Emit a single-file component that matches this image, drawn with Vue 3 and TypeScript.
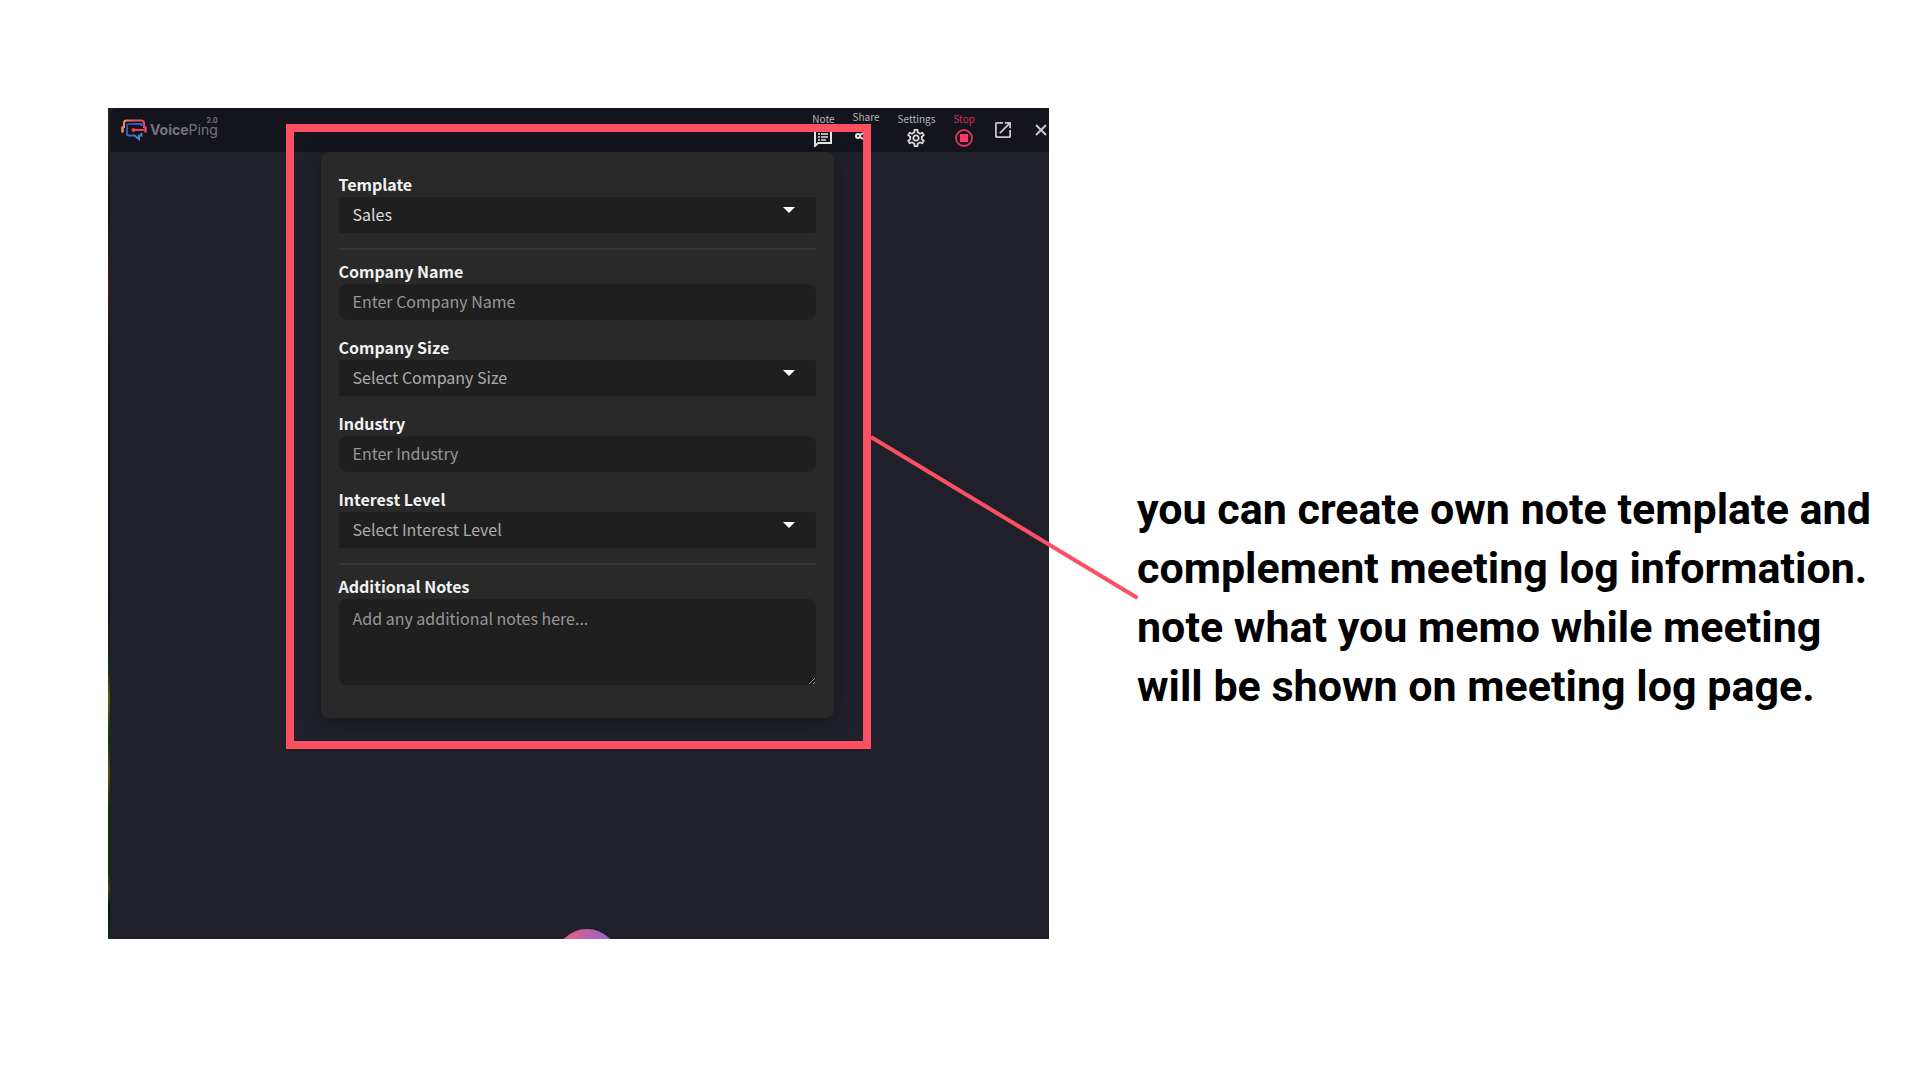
<script setup lang="ts">
import { ref } from 'vue'

interface Field {
  id: string
  label: string
  kind: 'select' | 'text'
  hint: string
  options?: string[]
}

const templates: string[] = ['Sales', 'Interview', 'Support']
const template = ref<string>('Sales')

const fields: Field[] = [
  { id: 'company-name', label: 'Company Name', kind: 'text', hint: 'Enter Company Name' },
  { id: 'company-size', label: 'Company Size', kind: 'select', hint: 'Select Company Size', options: ['1-50', '51-500', '500+'] },
  { id: 'industry', label: 'Industry', kind: 'text', hint: 'Enter Industry' },
  { id: 'interest-level', label: 'Interest Level', kind: 'select', hint: 'Select Interest Level', options: ['Low', 'Medium', 'High'] },
]

const values = ref<Record<string, string>>({
  'company-name': '',
  'company-size': '',
  industry: '',
  'interest-level': '',
})
const notes = ref<string>('')
</script>

<template>
  <main class="slide">
    <section class="shot">
      <div class="app">
        <header class="bar">
          <a class="brand" href="#" aria-label="VoicePing 2.0">
            <svg class="logo" viewBox="0 0 26 22" fill="none" aria-hidden="true">
              <defs>
                <linearGradient id="band" x1="0" y1="0" x2="26" y2="0" gradientUnits="userSpaceOnUse">
                  <stop offset="0" stop-color="#f6a04d" />
                  <stop offset="0.5" stop-color="#e8595a" />
                  <stop offset="1" stop-color="#e8405c" />
                </linearGradient>
                <linearGradient id="bubble" x1="5" y1="4" x2="20" y2="20" gradientUnits="userSpaceOnUse">
                  <stop offset="0" stop-color="#2b3fa8" />
                  <stop offset="1" stop-color="#4b8be0" />
                </linearGradient>
              </defs>
              <path d="M3 9V4q0-2.500 2.500-2.500h15q2.500 0 2.500 2.500v5" stroke="url(#band)" stroke-width="2" />
              <path d="M1.500 8.500v4M24.500 8.500v4" stroke="url(#band)" stroke-width="2.500" stroke-linecap="round" />
              <path d="M20.500 7V5H7.500Q6 5 6 6.500v8q0 2 2 2h5.500l4.500 3.500v-3.500h2.500V14" stroke="url(#bubble)" stroke-width="2" />
              <path d="M12 11h11.500" stroke="#e8405c" stroke-width="2" />
              <circle cx="12.500" cy="11" r="2" fill="#e8405c" />
            </svg>
            <span class="name">
              <span class="version">2.0</span>
              <span class="word"><b>Voice</b>Ping</span>
            </span>
          </a>
          <nav class="tools">
            <button class="tool" type="button">
              <span>Note</span>
              <svg width="18" height="18" viewBox="0 0 18 18" fill="none" stroke="#e6e6e6" stroke-width="2" aria-hidden="true">
                <path d="M1 17V1h16v13H4z" />
                <path d="M4 5h2M4 8h2M4 11h2M7 5h7M7 8h7M7 11h5" stroke-width="1.500" />
              </svg>
            </button>
            <button class="tool share" type="button">
              <span>Share</span>
              <svg width="18" height="18" viewBox="0 0 18 18" fill="none" stroke="#e6e6e6" stroke-width="2" aria-hidden="true">
                <circle cx="5" cy="9" r="2" />
                <circle cx="14" cy="4" r="2" />
                <circle cx="14" cy="14" r="2" />
                <path d="M7 8l5-3M7 10l5 3" />
              </svg>
            </button>
            <button class="tool" type="button">
              <span>Settings</span>
              <svg width="18" height="18" viewBox="2 2 20 20" fill="#d8d8d8" aria-hidden="true">
                <path d="M19.430 12.980c.040-.320.070-.640.070-.980s-.030-.660-.070-.980l2.110-1.650c.190-.150.240-.420.120-.640l-2-3.460c-.090-.160-.260-.250-.440-.250-.060 0-.120.010-.170.030l-2.490 1c-.520-.400-1.080-.730-1.690-.980l-.380-2.650C14.460 2.180 14.250 2 14 2h-4c-.250 0-.460.180-.490.420l-.380 2.650c-.610.250-1.170.590-1.690.980l-2.490-1c-.060-.020-.120-.030-.180-.030-.170 0-.340.090-.430.250l-2 3.460c-.130.220-.070.490.120.640l2.110 1.650c-.040.320-.070.650-.070.980s.030.660.070.980l-2.110 1.650c-.190.150-.240.420-.120.640l2 3.460c.090.160.260.250.440.250.060 0 .120-.010.170-.030l2.490-1c.520.400 1.080.730 1.690.980l.380 2.650c.030.240.240.420.490.420h4c.250 0 .460-.180.490-.420l.380-2.650c.610-.250 1.170-.590 1.690-.980l2.490 1c.060.020.120.030.180.030.170 0 .340-.090.430-.250l2-3.460c.120-.220.070-.490-.120-.640l-2.110-1.650zm-1.980-1.710c.040.310.050.520.050.730s-.020.430-.050.730l-.140 1.130.890.700 1.080.840-.700 1.210-1.270-.510-1.040-.420-.900.680c-.430.320-.840.560-1.250.730l-1.060.430-.160 1.130-.200 1.350h-1.400l-.190-1.350-.160-1.130-1.060-.430c-.430-.180-.830-.410-1.230-.710l-.910-.700-1.060.430-1.270.510-.700-1.210 1.080-.840.890-.700-.140-1.130c-.030-.310-.050-.540-.050-.740s.020-.430.050-.730l.140-1.130-.890-.700-1.080-.840.700-1.210 1.270.510 1.040.420.900-.680c.430-.320.840-.560 1.250-.730l1.060-.430.160-1.130.200-1.350h1.390l.190 1.350.160 1.130 1.060.430c.430.180.830.410 1.230.710l.910.700 1.060-.430 1.270-.510.700 1.210-1.070.850-.890.700.140 1.130zM12 8c-2.210 0-4 1.790-4 4s1.790 4 4 4 4-1.790 4-4-1.790-4-4-4zm0 6c-1.100 0-2-.900-2-2s.900-2 2-2 2 .900 2 2-.900 2-2 2z" />
              </svg>
            </button>
            <button class="tool stop" type="button">
              <span>Stop</span>
              <svg width="18" height="18" viewBox="0 0 18 18" aria-hidden="true">
                <circle cx="9" cy="9" r="8" fill="none" stroke="#e0305c" stroke-width="2" />
                <rect x="5" y="5" width="8" height="8" fill="#ff3868" />
              </svg>
            </button>
            <button class="tool" type="button" aria-label="Open in new window">
              <svg width="16" height="16" viewBox="3 3 18 18" fill="#c8c8c8" aria-hidden="true">
                <path d="M19 19H5V5h7V3H5c-1.110 0-2 .900-2 2v14c0 1.100.890 2 2 2h14c1.100 0 2-.900 2-2v-7h-2v7zM14 3v2h3.590l-9.830 9.830 1.410 1.410L19 6.410V10h2V3h-7z" />
              </svg>
            </button>
            <button class="tool close" type="button" aria-label="Close">
              <svg width="12" height="16" viewBox="0 0 12 16" stroke="#c8c8c8" stroke-width="2" aria-hidden="true">
                <path d="M1 3l10 10M11 3L1 13" />
              </svg>
            </button>
          </nav>
        </header>

        <form class="card" @submit.prevent>
          <div class="field">
            <label for="template">Template</label>
            <select id="template" v-model="template">
              <option v-for="t in templates" :key="t">{{ t }}</option>
            </select>
          </div>
          <hr />
          <div v-for="f in fields" :key="f.id" class="field">
            <label :for="f.id">{{ f.label }}</label>
            <select v-if="f.kind === 'select'" :id="f.id" v-model="values[f.id]" class="unset">
              <option value="">{{ f.hint }}</option>
              <option v-for="o in f.options" :key="o">{{ o }}</option>
            </select>
            <input v-else :id="f.id" v-model="values[f.id]" type="text" :placeholder="f.hint" />
          </div>
          <hr />
          <div class="field">
            <label for="notes">Additional Notes</label>
            <textarea id="notes" v-model="notes" placeholder="Add any additional notes here..."></textarea>
          </div>
        </form>
        <span class="orb"></span>
      </div>
      <div class="highlight"></div>
      <svg class="connector" viewBox="0 0 100 100" preserveAspectRatio="none" aria-hidden="true">
        <path d="M0 0L100 100" vector-effect="non-scaling-stroke" />
      </svg>
    </section>

    <p class="caption">
      you can create own note template and<br />
      complement meeting log information.<br />
      note what you memo while meeting<br />
      will be shown on meeting log page.
    </p>
  </main>
</template>

<style>
body {
  margin: 0;
  background: #fff;
}
</style>

<style scoped>
.slide {
  box-sizing: border-box;
  display: flex;
  align-items: flex-start;
  gap: 88px;
  min-height: 100vh;
  padding: 108px 0 108px 108px;
}

.shot {
  position: relative;
  flex: none;
  width: 52%;
  max-width: 941px;
  font-family: "Noto Sans CJK JP", "Noto Sans", sans-serif;
}

.app {
  position: relative;
  box-sizing: border-box;
  min-height: 831px;
  overflow: hidden;
  background: #20202a;
}

.app::before {
  content: "";
  position: absolute;
  inset: 0 auto 0 0;
  width: 2px;
  background: linear-gradient(#22240f, #14180f 12%, #3a1c20 22%, #101810 30%, #14141a 60%, #1c3010 68%, #5a5c14 71%, #143008 76%, #5c5010 80%, #123008 84%, #123008 92%, #3c4c08 94%, #04140a 96%, #123008);
}

.bar {
  display: flex;
  justify-content: space-between;
  height: 44px;
  margin-left: 2px;
  padding-right: 2px;
  border-top-left-radius: 8px;
  background: #14141d;
}

.brand {
  display: flex;
  align-items: flex-start;
  gap: 3px;
  padding: 9px 0 0 11px;
  color: #74747e;
  text-decoration: none;
}

.logo {
  width: 26px;
  height: 22px;
  padding-top: 2px;
}

.name {
  display: flex;
  flex-direction: column;
  align-items: flex-end;
}

.word {
  font: 14px/12px Inter, sans-serif;
}

.version {
  font: 700 7px/7px Inter, sans-serif;
}

.tools {
  display: flex;
  align-items: flex-start;
  gap: 18px;
}

.tool {
  display: flex;
  flex-direction: column;
  align-items: center;
  gap: 4px;
  padding: 4px 0 0;
  border: 0;
  background: none;
  color: #b4b4b8;
  font: 10px/13px "Noto Sans CJK JP", sans-serif;
}

.tool svg {
  display: block;
}

.share {
  align-items: flex-start;
  padding-top: 2px;
}

.stop {
  margin-right: 2px;
  color: #d42c5c;
}

.tool[aria-label] {
  padding-top: 14px;
}

.close {
  padding-left: 6px;
}

.card {
  position: relative;
  box-sizing: border-box;
  width: 513px;
  min-height: 566px;
  margin-left: calc(50% - 258px);
  padding: 21px 18px 32px;
  border-radius: 8px;
  background: #292929;
  box-shadow: 0 4px 20px rgb(0 0 0 / 30%);
}

.field {
  display: flex;
  flex-direction: column;
}

.field + .field {
  margin-top: 16px;
}

label {
  margin-bottom: 2px;
  color: #f2f2f2;
  font-size: 16px;
  font-weight: 700;
  line-height: 22px;
}

input,
select,
textarea {
  box-sizing: border-box;
  width: 100%;
  height: 36px;
  margin: 0;
  padding: 0 14px 2px;
  border: 0;
  border-radius: 8px;
  background: #1f1f1f;
  color: #dedede;
  font: 16px/24px "Noto Sans CJK JP", sans-serif;
}

select {
  appearance: none;
  border-radius: 2px;
  background: #1f1f1f url("data:image/svg+xml,%3Csvg xmlns='http://www.w3.org/2000/svg' width='12' height='6'%3E%3Cpath d='M0 0h12L6 6z' fill='white'/%3E%3C/svg%3E") no-repeat right 21px top 10px;
}

.unset {
  color: #adadad;
}

::placeholder {
  color: #979797;
  opacity: 1;
}

textarea {
  display: block;
  height: 86px;
  padding-top: 7px;
  resize: vertical;
}

hr {
  height: 2px;
  margin: 15px 0 10px;
  border: 0;
  background: #363636;
}

.orb {
  position: absolute;
  top: 821px;
  left: calc(50% - 24px);
  width: 64px;
  height: 64px;
  border-radius: 50%;
  background: linear-gradient(90deg, #f0607c 10%, #9a62c8 80%);
}

.highlight {
  position: absolute;
  top: 16px;
  left: calc(50% - 293px);
  box-sizing: border-box;
  width: 585px;
  height: 625px;
  border: 8px solid #fa5062;
}

.connector {
  position: absolute;
  top: 329px;
  left: calc(50% + 292px);
  width: calc(50% - 204px);
  height: 161px;
  overflow: visible;
}

.connector path {
  fill: none;
  stroke: #fa5062;
  stroke-width: 4px;
}

.caption {
  flex: 1;
  margin: 372px 0 0;
  color: #000;
  font: 700 43px/59px Roboto, sans-serif;
  white-space: nowrap;
}
</style>
